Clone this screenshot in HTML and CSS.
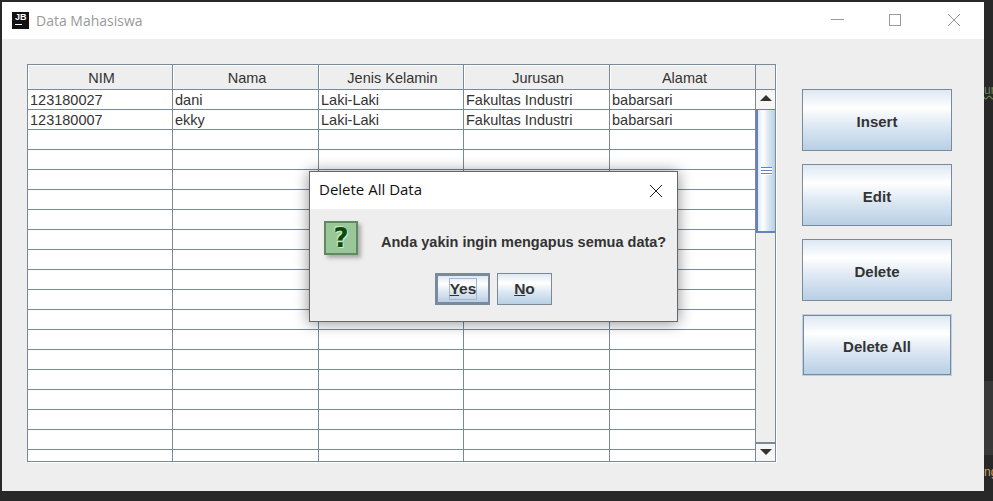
FILE: index.html
```html
<!DOCTYPE html>
<html lang="en">
<head>
    <meta charset="UTF-8">
    <title>Data Mahasiswa</title>
    <link rel="stylesheet" href="styles.css">
</head>
<body>
    <div class="window">
        <header class="title-bar">
            <div class="app-logo"><span>JB</span><i></i></div>
            <span class="window-title">Data Mahasiswa</span>
            <div class="window-controls">
                <svg width="58" height="37" viewBox="0 0 58 37"><path d="M22 17.5h13" stroke="#999" fill="none"/></svg>
                <svg width="58" height="37" viewBox="0 0 58 37"><rect x="22.5" y="12.5" width="11" height="11" stroke="#999" fill="none"/></svg>
                <svg width="58" height="37" viewBox="0 0 58 37"><path d="M23 12l12 12M35 12L23 24" stroke="#999" fill="none"/></svg>
            </div>
        </header>

        <main class="content">
            <!-- Table with scrollbar -->
            <section class="table-pane">
                <div class="table-area">
                    <table class="data-table">
                        <thead>
                            <tr><th>NIM</th><th>Nama</th><th>Jenis Kelamin</th><th>Jurusan</th><th>Alamat</th></tr>
                        </thead>
                        <tbody>
                            <tr><td>123180027</td><td>dani</td><td>Laki-Laki</td><td>Fakultas Industri</td><td>babarsari</td></tr>
                            <tr><td>123180007</td><td>ekky</td><td>Laki-Laki</td><td>Fakultas Industri</td><td>babarsari</td></tr>
                            <tr><td></td><td></td><td></td><td></td><td></td></tr>
                            <tr><td></td><td></td><td></td><td></td><td></td></tr>
                            <tr><td></td><td></td><td></td><td></td><td></td></tr>
                            <tr><td></td><td></td><td></td><td></td><td></td></tr>
                            <tr><td></td><td></td><td></td><td></td><td></td></tr>
                            <tr><td></td><td></td><td></td><td></td><td></td></tr>
                            <tr><td></td><td></td><td></td><td></td><td></td></tr>
                            <tr><td></td><td></td><td></td><td></td><td></td></tr>
                            <tr><td></td><td></td><td></td><td></td><td></td></tr>
                            <tr><td></td><td></td><td></td><td></td><td></td></tr>
                            <tr><td></td><td></td><td></td><td></td><td></td></tr>
                            <tr><td></td><td></td><td></td><td></td><td></td></tr>
                            <tr><td></td><td></td><td></td><td></td><td></td></tr>
                            <tr><td></td><td></td><td></td><td></td><td></td></tr>
                            <tr><td></td><td></td><td></td><td></td><td></td></tr>
                            <tr><td></td><td></td><td></td><td></td><td></td></tr>
                            <tr><td></td><td></td><td></td><td></td><td></td></tr>
                        </tbody>
                    </table>
                </div>
                <div class="scroll-column">
                    <div class="scroll-corner"></div>
                    <div class="scrollbar">
                        <div class="scroll-btn scroll-up"><b class="arrow-up"></b></div>
                        <div class="scroll-thumb"><i class="grip"></i></div>
                        <div class="scroll-track"></div>
                        <div class="scroll-btn scroll-down"><b class="arrow-down"></b></div>
                    </div>
                </div>
            </section>

            <!-- Action buttons -->
            <nav class="actions">
                <button class="metal-btn action-btn">Insert</button>
                <button class="metal-btn action-btn">Edit</button>
                <button class="metal-btn action-btn">Delete</button>
                <button class="metal-btn action-btn focused">Delete All</button>
            </nav>
        </main>

        <!-- Confirm dialog -->
        <div class="dialog">
            <div class="dialog-title">
                <span>Delete All Data</span>
                <svg width="14" height="14" viewBox="0 0 14 14"><path d="M1 1l12 12M13 1L1 13" stroke="#222" fill="none"/></svg>
            </div>
            <div class="dialog-body">
                <div class="dialog-message">
                    <div class="question-icon">?</div>
                    <p>Anda yakin ingin mengapus semua data?</p>
                </div>
                <div class="dialog-buttons">
                    <button class="metal-btn dialog-btn default-btn"><span class="focus-box"><u>Y</u>es</span></button>
                    <button class="metal-btn dialog-btn"><span><u>N</u>o</span></button>
                </div>
            </div>
        </div>
    </div>

    <!-- Editor showing behind the window -->
    <aside class="behind">
        <span class="behind-top">un</span>
        <div class="behind-band"></div>
        <span class="behind-bottom">ng</span>
    </aside>
</body>
</html>
```

FILE: styles.css
```css
* {
    margin: 0;
    padding: 0;
    box-sizing: border-box;
}

body {
    display: flex;
    width: 993px;
    height: 501px;
    padding: 2px 0 0 2px;
    overflow: hidden;
    font-family: "Liberation Sans", Arial, sans-serif;
    background-color: #282828;
    color: #333;
}

.window {
    position: relative;
    display: flex;
    flex-direction: column;
    flex: none;
    width: 982px;
    height: 489px;
    background-color: #eee;
}

.title-bar {
    display: flex;
    align-items: center;
    flex: none;
    height: 37px;
    padding-left: 10px;
    background-color: #fff;
}

.app-logo {
    position: relative;
    display: flex;
    flex-direction: column;
    width: 17px;
    height: 17px;
    padding: 1px 0 0 3px;
    background-color: #111;
    color: #fff;
    font-size: 9px;
    font-weight: bold;
    line-height: 9px;
}

.app-logo i {
    width: 7px;
    height: 1px;
    margin-top: 2px;
    background-color: #fff;
}

.window-title {
    margin-left: 7px;
    font-family: "Open Sans", sans-serif;
    font-size: 14px;
    color: #999;
}

.window-controls {
    display: flex;
    margin-left: auto;
    padding-right: 1px;
}

.content {
    display: flex;
    flex: 1;
    padding: 25px 0 0 25px;
}

.table-pane {
    display: flex;
    width: 749px;
    height: 398px;
    border: 1px solid #7a8a99;
    box-shadow: 1px 1px 0 #fff;
}

.table-area {
    width: 728px;
    overflow: hidden;
    background-color: #fff;
}

.data-table {
    width: 728px;
    table-layout: fixed;
    border-collapse: separate;
    border-spacing: 0;
    font-size: 14.5px;
}

.data-table th {
    height: 25px;
    padding: 2px 0 0 3px;
    font-weight: normal;
    background-color: #eee;
    border-right: 1px solid #7a8a99;
    border-bottom: 1px solid #7a8a99;
    box-shadow: inset 1px 1px 0 #fff;
}

.data-table td {
    height: 20px;
    padding: 2px 2px 0;
    border-right: 1px solid #7a8a99;
    border-bottom: 1px solid #7a8a99;
    white-space: nowrap;
    line-height: 17px;
}

.data-table th:nth-child(odd),
.data-table td:nth-child(odd) {
    width: 145px;
}

.data-table th:nth-child(even),
.data-table td:nth-child(even) {
    width: 146px;
}

.data-table th:last-child,
.data-table td:last-child {
    width: 147px;
}

.data-table td:last-child {
    border-right-width: 2px;
}

.scroll-column {
    display: flex;
    flex-direction: column;
    width: 19px;
}

.scroll-corner {
    flex: none;
    height: 25px;
    margin-left: -1px;
    border-left: 1px solid #7a8a99;
    border-bottom: 1px solid #7a8a99;
}

.scrollbar {
    display: flex;
    flex-direction: column;
    flex: 1;
    margin-left: -1px;
    border-left: 1px solid #7a8a99;
}

.scroll-btn {
    display: flex;
    align-items: center;
    justify-content: center;
    flex: none;
    height: 20px;
    background-color: #eee;
}

.scroll-up {
    padding-bottom: 4px;
    background-color: #f6f6f6;
    border-bottom: 1px solid #6382bf;
}

.scroll-down {
    height: 19px;
    padding-bottom: 2px;
    background-color: #f6f6f6;
    border-top: 2px solid #7a8a99;
}

.arrow-up {
    border-left: 6px solid transparent;
    border-right: 6px solid transparent;
    border-bottom: 6px solid #333;
}

.arrow-down {
    border-left: 6px solid transparent;
    border-right: 6px solid transparent;
    border-top: 6px solid #333;
}

.scroll-thumb {
    display: flex;
    align-items: center;
    justify-content: center;
    flex: none;
    height: 123px;
    border-left: 2px solid #6382bf;
    border-bottom: 2px solid #6382bf;
    background: linear-gradient(to right, #dde8f3 0%, #fff 30%, #dde8f3 60%, #b8cfe5 100%);
}

.grip {
    width: 11px;
    height: 8px;
    background: repeating-linear-gradient(to bottom, #6382bf 0, #6382bf 1px, #fff 1px, #fff 3px);
}

.scroll-track {
    flex: 1;
    background-color: #eee;
}

.actions {
    display: flex;
    flex-direction: column;
    gap: 13px;
    margin: 25px 0 0 26px;
}

.metal-btn {
    border: 1px solid #7a8a99;
    font-family: "Liberation Sans", Arial, sans-serif;
    font-weight: bold;
    color: #333;
    background: linear-gradient(to bottom, #dde8f3 0%, #fff 30%, #dde8f3 60%, #b8cfe5 100%);
}

.action-btn {
    width: 150px;
    height: 62px;
    padding-top: 2px;
    font-size: 15px;
}

.action-btn.focused {
    width: 148px;
    height: 60px;
    margin: 1px;
    box-shadow: 0 0 0 1px #b8cfe5;
}

.dialog {
    position: absolute;
    left: 307px;
    top: 169px;
    display: flex;
    flex-direction: column;
    width: 369px;
    height: 151px;
    border: 1px solid #666;
    box-shadow: 0 1px 14px rgba(0, 0, 0, 0.45);
}

.dialog-title {
    display: flex;
    align-items: center;
    justify-content: space-between;
    flex: none;
    height: 37px;
    padding: 0 14px 3px 9px;
    background-color: #fff;
    font-family: "Open Sans", sans-serif;
    font-size: 15px;
    color: #111;
}

.dialog-title svg {
    margin-top: 3px;
}

.dialog-body {
    flex: 1;
    padding: 12px 0 0 14px;
    background-color: #eee;
}

.dialog-message {
    display: flex;
    align-items: center;
    gap: 23px;
}

.dialog-message p {
    margin-top: 8px;
    font-size: 14.5px;
    font-weight: bold;
}

.question-icon {
    width: 34px;
    height: 34px;
    border: 2px solid #5f8a5f;
    background-color: #9ac79a;
    box-shadow: 3px 3px 4px #aaa;
    font-family: "DejaVu Sans", sans-serif;
    font-size: 26px;
    font-weight: bold;
    line-height: 30px;
    text-align: center;
    color: #0a4a0a;
    text-shadow: 1px 1px 0 #cdeccd, -1px -1px 0 #cdeccd;
}

.dialog-buttons {
    display: flex;
    justify-content: center;
    gap: 7px;
    margin-top: 18px;
    padding-right: 14px;
}

.dialog-btn {
    display: flex;
    align-items: center;
    justify-content: center;
    width: 55px;
    height: 32px;
    font-size: 15.5px;
}

.default-btn {
    border: 3px solid #7a8a99;
    border-right-width: 2px;
}

.focus-box {
    padding: 1px 0;
    border: 1px solid #a3b8cc;
}

.behind {
    display: flex;
    flex-direction: column;
    flex: 1;
    overflow: hidden;
    font-size: 12px;
    white-space: nowrap;
}

.behind-top {
    margin-top: 81px;
    color: #6a8759;
    text-decoration: underline wavy #6a8759;
}

.behind-band {
    height: 74px;
    margin-top: 284px;
    background-color: #383838;
}

.behind-bottom {
    margin-top: 10px;
    color: #c9a26b;
}
```
